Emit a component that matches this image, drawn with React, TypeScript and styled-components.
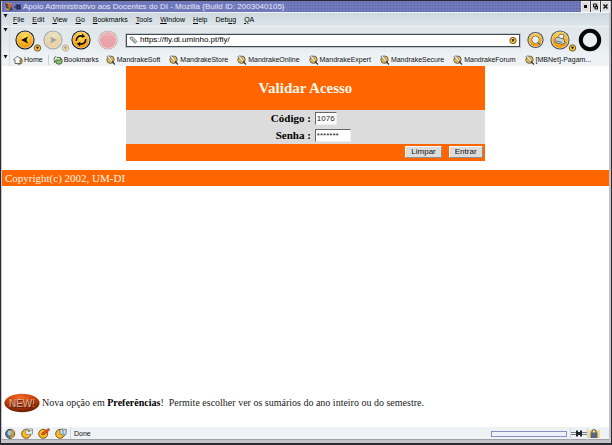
import React from "react";
import styled, { createGlobalStyle } from "styled-components";

const sans = `"Liberation Sans", Arial, sans-serif`;
const serif = `"Liberation Serif", "Times New Roman", serif`;
const orange = "#ff6600";

const GlobalStyle = createGlobalStyle`
  * { box-sizing: border-box; }
  body { margin: 0; background: #fff; }
  button, input { font-family: ${sans}; margin: 0; }
`;

const Window = styled.div`
  min-height: 100vh;
  display: flex;
  flex-direction: column;
  border: solid #2a2a30;
  border-width: 1px 1px 2px 1px;
  background: #c4c4c8;
  padding: 0 2px 3px 1px;
  font: 8px/10px ${sans};
  color: #111;
`;

const TitleBar = styled.header`
  display: flex;
  align-items: center;
  height: 11px;
  margin-right: -1px;
  padding-left: 2px;
  color: #e8e8fa;
  background-color: #7078bc;
  background-image: radial-gradient(circle, #5860a6 30%, transparent 35%);
  background-size: 3px 3px;
`;

const TitleText = styled.h1`
  margin: 0;
  padding: 0 3px 0 2px;
  background: #7078bc;
  font: 8px/10px ${sans};
  white-space: nowrap;
`;

const WindowButtons = styled.div`
  display: flex;
  margin-left: auto;
  background: #444;
  gap: 1px;
`;

const WindowButton = styled.button`
  display: flex;
  padding: 1px;
  border: 1px solid #eee;
  background: #dcdcdc;
`;

const Chrome = styled.div`
  background: linear-gradient(#cbd7de, #e0e8eb 30%, #e2e8ec 50%, #eef2f5 85%);
`;

const Bar = styled.div<{ $height: number }>`
  display: flex;
  align-items: center;
  height: ${(p) => p.$height}px;
  border-top: 1px solid #edf3f6;
`;

const Grip = styled.div`
  align-self: stretch;
  flex: none;
  width: 8px;
  padding: 1px 0 0 1px;
  border-right: 1px solid #d2dce2;
  svg { display: block; }
`;

const MenuList = styled.nav`
  display: flex;
  gap: 8px;
  padding-left: 3px;
`;

const MenuButton = styled.button`
  padding: 0;
  border: 0;
  background: none;
  font-size: 7px;
  line-height: 10px;
  color: #000;
  u { text-underline-offset: 1px; }
`;

const ToolButton = styled.button`
  display: flex;
  flex: none;
  padding: 0;
  border: 0;
  background: none;
`;

const NavTools = styled.div`
  display: flex;
  align-items: center;
  flex: none;
  width: 116px;
  padding-left: 5px;
`;

const AddressBar = styled.label`
  display: flex;
  align-items: center;
  flex: 1;
  min-width: 0;
  height: 13px;
  padding: 0 2px;
  border: 1px solid #444a4e;
  outline: 1px solid #bcc6cc;
  background: #fff;
`;

const AddressInput = styled.input`
  flex: 1;
  min-width: 0;
  padding: 0 2px;
  border: 0;
  outline: 0;
  background: transparent;
  font-size: 8px;
  line-height: 10px;
`;

const RightTools = styled.div`
  display: flex;
  align-items: center;
  flex: none;
  padding: 0 7px 0 7px;
`;

const BookmarkList = styled.nav`
  display: flex;
  flex: 1;
  align-items: center;
  gap: 5px;
  min-width: 0;
  padding-left: 3px;
`;

const SiteList = styled.div`
  display: flex;
  gap: 9px;
  padding-left: 2px;
`;

const Bookmark = styled.a<{ $divided?: boolean }>`
  display: flex;
  align-items: center;
  gap: 1px;
  padding-left: ${(p) => (p.$divided ? 4 : 0)}px;
  border-left: ${(p) => (p.$divided ? "1px solid #c6d0d6" : "0")};
  color: #111;
  font-size: 7px;
  line-height: 10px;
  text-decoration: none;
  white-space: nowrap;
  svg { flex: none; }
`;

const Page = styled.main`
  flex: 1;
  display: flex;
  flex-direction: column;
  background: #fff;
  font-family: ${serif};
`;

const LoginForm = styled.form`
  width: 59%;
  margin: 0 auto 9px;
  background: ${orange};
`;

const FormTitle = styled.h2`
  margin: 0;
  padding: 13px 0 13px;
  color: #fff6ee;
  font: bold 15px/18px ${serif};
  text-align: center;
`;

const Fields = styled.div`
  display: grid;
  grid-template-columns: 51.5% 1fr;
  column-gap: 4px;
  row-gap: 3px;
  align-items: center;
  padding: 1px 0 2px;
  background: #dcdcdc;
`;

const FieldLabel = styled.label`
  color: #000;
  font: bold 11px/14px ${serif};
  text-align: right;
`;

const Field = styled.input<{ $width: number }>`
  width: ${(p) => p.$width}px;
  height: 13px;
  padding: 0 1px;
  border: 1px solid #eee;
  border-top-color: #666;
  border-left-color: #666;
  border-radius: 0;
  background: #fff;
  color: #222;
  font-size: 8px;
  line-height: 10px;
`;

const Actions = styled.div`
  display: flex;
  justify-content: flex-end;
  gap: 7px;
  padding: 2px 2px 3px;
`;

const ActionButton = styled.button`
  height: 12px;
  padding: 0 5px;
  border: 1px solid;
  border-color: #fafafa #909090 #909090 #fafafa;
  background: #dcdcdc;
  color: #111;
  font-size: 8px;
  line-height: 10px;
`;

const Copyright = styled.footer`
  padding: 0 3px;
  background: ${orange};
  color: #fff4e8;
  font-size: 11px;
  line-height: 16px;
`;

const News = styled.p`
  display: flex;
  align-items: center;
  gap: 2px;
  margin: auto 0 14px;
  padding-left: 2px;
  color: #222;
  font-size: 10px;
  line-height: 12px;
  svg { flex: none; }
  b { color: #000; }
`;

const StatusBar = styled.footer`
  display: flex;
  align-items: center;
  height: 13px;
  padding: 1px 9px 0 3px;
  background: #eef2f5;
  border-bottom: 1px solid #9ea2a6;
  font-size: 7px;
`;

const StatusIcons = styled.div`
  display: flex;
  gap: 5px;
  padding-right: 3px;
  border-right: 1px solid #cfdbe1;
`;

const StatusText = styled.span`
  flex: 1;
  padding: 1px 0 0 3px;
`;

const Progress = styled.div`
  width: 76px;
  height: 6px;
  border: 1px solid #8a8fc0;
  background: #eef0fa;
  margin-right: 3px;
`;

const StatusCell = styled.div`
  display: flex;
  align-items: center;
  height: 12px;
  border-left: 1px solid #cfdbe1;
`;

type OrbKind = "back" | "forward" | "reload" | "stop" | "search" | "print";

const DropMark = ({ cx, cy }: { cx: number; cy: number }) => (
  <g>
    <circle cx={cx} cy={cy} r="3.2" fill="#fbc02d" stroke="#65563a" strokeWidth="0.9" />
    <path d={`M${cx - 1.5} ${cy - 1.2}h3l-1.5 2.6z`} fill="#111" />
  </g>
);

function Orb({ kind, size = 20, drop = false }: { kind: OrbKind; size?: number; drop?: boolean }) {
  const off = kind === "forward" || kind === "stop";
  const id = `orb-${kind}`;
  return (
    <svg width={drop ? 28 : size} height="24" viewBox={`0 0 ${drop ? 28 : size} 24`} aria-hidden="true">
      <defs>
        <radialGradient id={id} cx="50%" cy="25%" r="75%">
          <stop offset="0" stopColor={kind === "stop" ? "#f3a4aa" : "#ffe25e"} />
          <stop offset="1" stopColor={kind === "stop" ? "#ea6e79" : "#f39200"} />
        </radialGradient>
      </defs>
      <g opacity={off ? (kind === "stop" ? 0.65 : 0.32) : 1}>
        <circle cx={size / 2} cy="12" r={size / 2 - 0.4} fill={kind === "stop" ? "#bb8e94" : kind === "search" || kind === "print" ? "#50555a" : "#15171a"} />
        <circle cx={size / 2} cy="12" r={size / 2 - 1.5} fill="#f4ead0" />
        <circle cx={size / 2} cy="12" r={size / 2 - 2.1} fill={`url(#${id})`} />
        {kind === "back" && <path d="M6 12l7-3.4-1.5 3.4 1.5 3.4z" fill="#111" />}
        {kind === "forward" && <path d="M14 12L7 8.6 8.5 12 7 15.4z" fill="#111" />}
        {kind === "reload" && (
          <g fill="none" stroke="#111" strokeWidth="1.6">
            <path d="M5.4 12.8C5 9.6 8 7 11.5 8.2M14.6 11.2c.4 3.2-2.6 5.8-6.1 4.6" />
            <path d="M11 5.6l3.2 2.9-3.5 1.6zM9 18.4l-3.2-2.9 3.5-1.6z" fill="#111" stroke="none" />
          </g>
        )}
        {kind === "stop" && <circle cx="10" cy="12" r="5" fill="#ed7a85" opacity=".7" />}
        {kind === "search" && (
          <g>
            <path d="M10 13.5l3 3" stroke="#666" strokeWidth="1.6" />
            <circle cx="8.5" cy="11.7" r="3.8" fill="#eceff0" stroke="#8a8060" />
          </g>
        )}
        {kind === "print" && (
          <g stroke="#4b4b48" strokeWidth=".7">
            <path d="M8 10l2-4 4 1-1 4z" fill="#fff" />
            <path d="M5 11l2-2 7 2 1 4-3 1.5-7-2z" fill="#c8ccd0" />
            <path d="M6 13l6 1.5" />
          </g>
        )}
      </g>
      {drop && <g opacity={off ? 0.4 : 1}><DropMark cx={22.5} cy={20} /></g>}
    </svg>
  );
}

const GripMark = () => (
  <Grip>
    <svg width="5" height="4" viewBox="0 0 5 4" aria-hidden="true"><path d="M.5 0h4l-2 3.5z" fill="#111" /></svg>
  </Grip>
);

function BookmarkIcon({ kind }: { kind: "home" | "folder" | "site" }) {
  if (kind === "site")
    return (
      <svg width="10" height="10" viewBox="0 0 10 10" aria-hidden="true">
        <circle cx="4.5" cy="4.7" r="3.7" fill="#f9bd2c" stroke="#4f5860" strokeWidth=".9" />
        <path d="M.8 1.5L3 .8l3.7 5L5.5 7.2z" fill="#f2f5f7" stroke="#59626d" strokeWidth=".6" />
        <path d="M6 6.5l3 3" stroke="#333" strokeWidth="1.1" />
      </svg>
    );
  return (
    <svg width="10" height="10" viewBox="0 0 10 10" aria-hidden="true">
      <circle cx="6" cy="6" r="3.3" fill={kind === "home" ? "#f4b629" : "#8cc069"} stroke="#474c45" strokeWidth=".8" />
      {kind === "home" ? (
        <path d="M.5 5L4.5 1l4 4H7v3.5H2V5z" fill="#f8fafa" stroke="#4d5658" strokeWidth=".8" />
      ) : (
        <path d="M1 3l2-1.5 1 1h3.5v2.5H3L1.5 8z" fill="#dcecc8" stroke="#435c3c" strokeWidth=".8" />
      )}
    </svg>
  );
}

function StatusIcon({ kind }: { kind: "globe" | "mail" | "pen" | "book" }) {
  const w = kind === "globe" ? 11 : 12;
  return (
    <svg width={w} height="11" viewBox={`0 0 ${w} 11`} aria-hidden="true">
      <circle cx="5.2" cy="5.8" r="4.5" fill={kind === "globe" ? "#607c91" : "#fdbc23"} stroke={kind === "globe" ? "#333b42" : "#805018"} strokeWidth="1" />
      {kind === "globe" && (
        <g>
          <path d="M5 1.6q5 0 4.400 4.600T5 10q3-4 0-8.400z" fill="#d39b37" />
          <ellipse cx="4.5" cy="5" rx="2" ry="2.4" fill="#a9c7da" />
        </g>
      )}
      {kind === "mail" && <path d="M4.5 1h7v5L5 6.5zM5 1.5L8 4l3.5-2.5" fill="#f0f5fa" stroke="#68798b" strokeWidth=".7" />}
      {kind === "pen" && <path d="M3.5 7l1-2.5L10.5.5l1.2 1.5-5.4 4.5z" fill="#ee4e13" stroke="#84361a" strokeWidth=".6" />}
      {kind === "book" && <path d="M4.5 2l3-1 4 .5-.5 5-3 .7-3-1.2zM8 1.5v5" fill="#c7d8e4" stroke="#52687a" strokeWidth=".7" />}
    </svg>
  );
}

const NewBadge = () => (
  <svg width="36" height="20" viewBox="0 0 36 20" role="img" aria-label="NEW!">
    <defs>
      <radialGradient id="badge" cx="45%" cy="20%" r="75%">
        <stop offset="0" stopColor="#ef6925" />
        <stop offset=".6" stopColor="#c43c08" />
        <stop offset="1" stopColor="#6f2106" />
      </radialGradient>
    </defs>
    <ellipse cx="18" cy="10" rx="17.6" ry="9.2" fill="url(#badge)" />
    <text x="18.5" y="14.5" fontFamily="Liberation Sans" fontSize="10" fill="#4b2014" textAnchor="middle">NEW!</text>
    <text x="18" y="14" fontFamily="Liberation Sans" fontSize="10" fill="#d6b7a4" textAnchor="middle" aria-hidden="true">NEW!</text>
  </svg>
);

const menus: [string, string, string][] = [
  ["", "F", "ile"], ["", "E", "dit"], ["", "V", "iew"], ["", "G", "o"], ["", "B", "ookmarks"],
  ["", "T", "ools"], ["", "W", "indow"], ["", "H", "elp"], ["Deb", "u", "g"], ["", "Q", "A"],
];

const sites = ["MandrakeSoft", "MandrakeStore", "MandrakeOnline", "MandrakeExpert", "MandrakeSecure", "MandrakeForum", "[MBNet]-Pagam..."];

export default function App() {
  return (
    <>
      <GlobalStyle />
      <Window>
        <TitleBar>
          <svg width="17" height="11" viewBox="0 0 17 11" aria-hidden="true">
            <path d="M1 2h6l2 7H2z" fill="#d99632" />
            <path d="M1 2l3 1 1 5-3-1zM7 4l2 5-4 1z" fill="#38475b" />
            <path d="M3 5l3-3 2 3-2 2z" fill="#ce5f31" />
            <path d="M10 6h3M13 3v6M16 3v6M13 6h3M13 4l3 1M13 8l3-1" stroke="#14183c" />
          </svg>
          <TitleText>Apoio Administrativo aos Docentes do DI - Mozilla {"{"}Build ID: 2003040105{"}"}</TitleText>
          <WindowButtons>
            {["Minimize", "Maximize", "Close"].map((name) => (
              <WindowButton key={name} type="button" aria-label={name}>
                <svg width="5" height="7" viewBox="0 0 5 7" aria-hidden="true">
                  {name === "Minimize" && <path d="M1 2h3v3H1z" fill="#111" />}
                  {name === "Maximize" && <path d="M.5 1h3v3h-3zM2 3h2.5v3H2z" fill="#ddd" stroke="#111" />}
                  {name === "Close" && <path d="M.5 1.5l4 4M4.5 1.5l-4 4" stroke="#111" strokeWidth="1.4" />}
                </svg>
              </WindowButton>
            ))}
          </WindowButtons>
        </TitleBar>

        <Chrome>
          <Bar $height={14}>
            <GripMark />
            <MenuList>
              {menus.map(([before, key, after]) => (
                <MenuButton key={before + key + after} type="button">{before}<u>{key}</u>{after}</MenuButton>
              ))}
            </MenuList>
          </Bar>
          <Bar $height={27}>
            <GripMark />
            <NavTools>
              <ToolButton type="button" aria-label="Back"><Orb kind="back" drop /></ToolButton>
              <ToolButton type="button" aria-label="Forward" disabled><Orb kind="forward" drop /></ToolButton>
              <ToolButton type="button" aria-label="Reload"><Orb kind="reload" /></ToolButton>
              <svg width="7" height="1" aria-hidden="true" />
              <ToolButton type="button" aria-label="Stop" disabled><Orb kind="stop" /></ToolButton>
            </NavTools>
            <AddressBar>
              <svg width="9" height="9" viewBox="0 0 9 9" aria-hidden="true">
                <path d="M1 1.5l2.5-.5L8 5.5 6 7.5 1.5 3z" fill="#d8dee2" stroke="#59656e" strokeWidth=".8" />
                <path d="M3 3l3.5 3.5" stroke="#7b878e" />
              </svg>
              <AddressInput aria-label="Address" defaultValue="https://fly.di.uminho.pt/fly/" />
              <svg width="8" height="9" viewBox="0 0 8 9" aria-hidden="true"><DropMark cx={4} cy={4.5} /></svg>
            </AddressBar>
            <RightTools>
              <ToolButton type="button" aria-label="Search"><Orb kind="search" size={17} /></ToolButton>
              <svg width="6" height="1" aria-hidden="true" />
              <ToolButton type="button" aria-label="Print"><Orb kind="print" drop /></ToolButton>
              <svg width="24" height="24" viewBox="0 0 24 24" role="img" aria-label="Activity">
                <circle cx="12" cy="12" r="9.2" fill="#e9eff1" stroke="#050505" strokeWidth="4" />
              </svg>
            </RightTools>
          </Bar>
          <Bar $height={13}>
            <GripMark />
            <BookmarkList>
              <Bookmark href="#home"><BookmarkIcon kind="home" />Home</Bookmark>
              <Bookmark href="#bookmarks" $divided><BookmarkIcon kind="folder" />Bookmarks</Bookmark>
              <SiteList>
                {sites.map((site) => (
                  <Bookmark key={site} href="#site"><BookmarkIcon kind="site" />{site}</Bookmark>
                ))}
              </SiteList>
            </BookmarkList>
          </Bar>
        </Chrome>

        <Page>
          <LoginForm>
            <FormTitle>Validar Acesso</FormTitle>
            <Fields>
              <FieldLabel htmlFor="codigo">Código :</FieldLabel>
              <Field id="codigo" $width={22} defaultValue="1076" />
              <FieldLabel htmlFor="senha">Senha :</FieldLabel>
              <Field id="senha" $width={36} defaultValue="*******" />
            </Fields>
            <Actions>
              <ActionButton type="reset">Limpar</ActionButton>
              <ActionButton type="button">Entrar</ActionButton>
            </Actions>
          </LoginForm>
          <Copyright>Copyright(c) 2002, UM-DI</Copyright>
          <News>
            <NewBadge />
            <span>Nova opção em <b>Preferências</b>!&nbsp; Permite escolher ver os sumários do ano inteiro ou do semestre.</span>
          </News>
        </Page>

        <StatusBar>
          <StatusIcons>
            <StatusIcon kind="globe" />
            <StatusIcon kind="mail" />
            <StatusIcon kind="pen" />
            <StatusIcon kind="book" />
          </StatusIcons>
          <StatusText>Done</StatusText>
          <Progress role="progressbar" aria-label="Page loading" />
          <StatusCell>
            <svg width="16" height="9" viewBox="0 0 16 9" aria-hidden="true">
              <path d="M0 3.5h5M0 5.5h5M11 3.5h5M11 5.5h5" stroke="#777d82" />
              <path d="M5 1.5h2v1.5h2V1.5h2v6H9V6H7v1.5H5z" fill="#20262c" />
            </svg>
          </StatusCell>
          <StatusCell>
            <svg width="12" height="11" viewBox="0 0 12 11" aria-hidden="true">
              <path d="M0 2h12v8H0z" fill="#f3dd8c" />
              <path d="M4 5V3q2-3 4 0v2" fill="none" stroke="#555d66" strokeWidth="1.2" />
              <path d="M2.5 4.5h7V10h-7z" fill="#586878" />
            </svg>
          </StatusCell>
        </StatusBar>
      </Window>
    </>
  );
}
